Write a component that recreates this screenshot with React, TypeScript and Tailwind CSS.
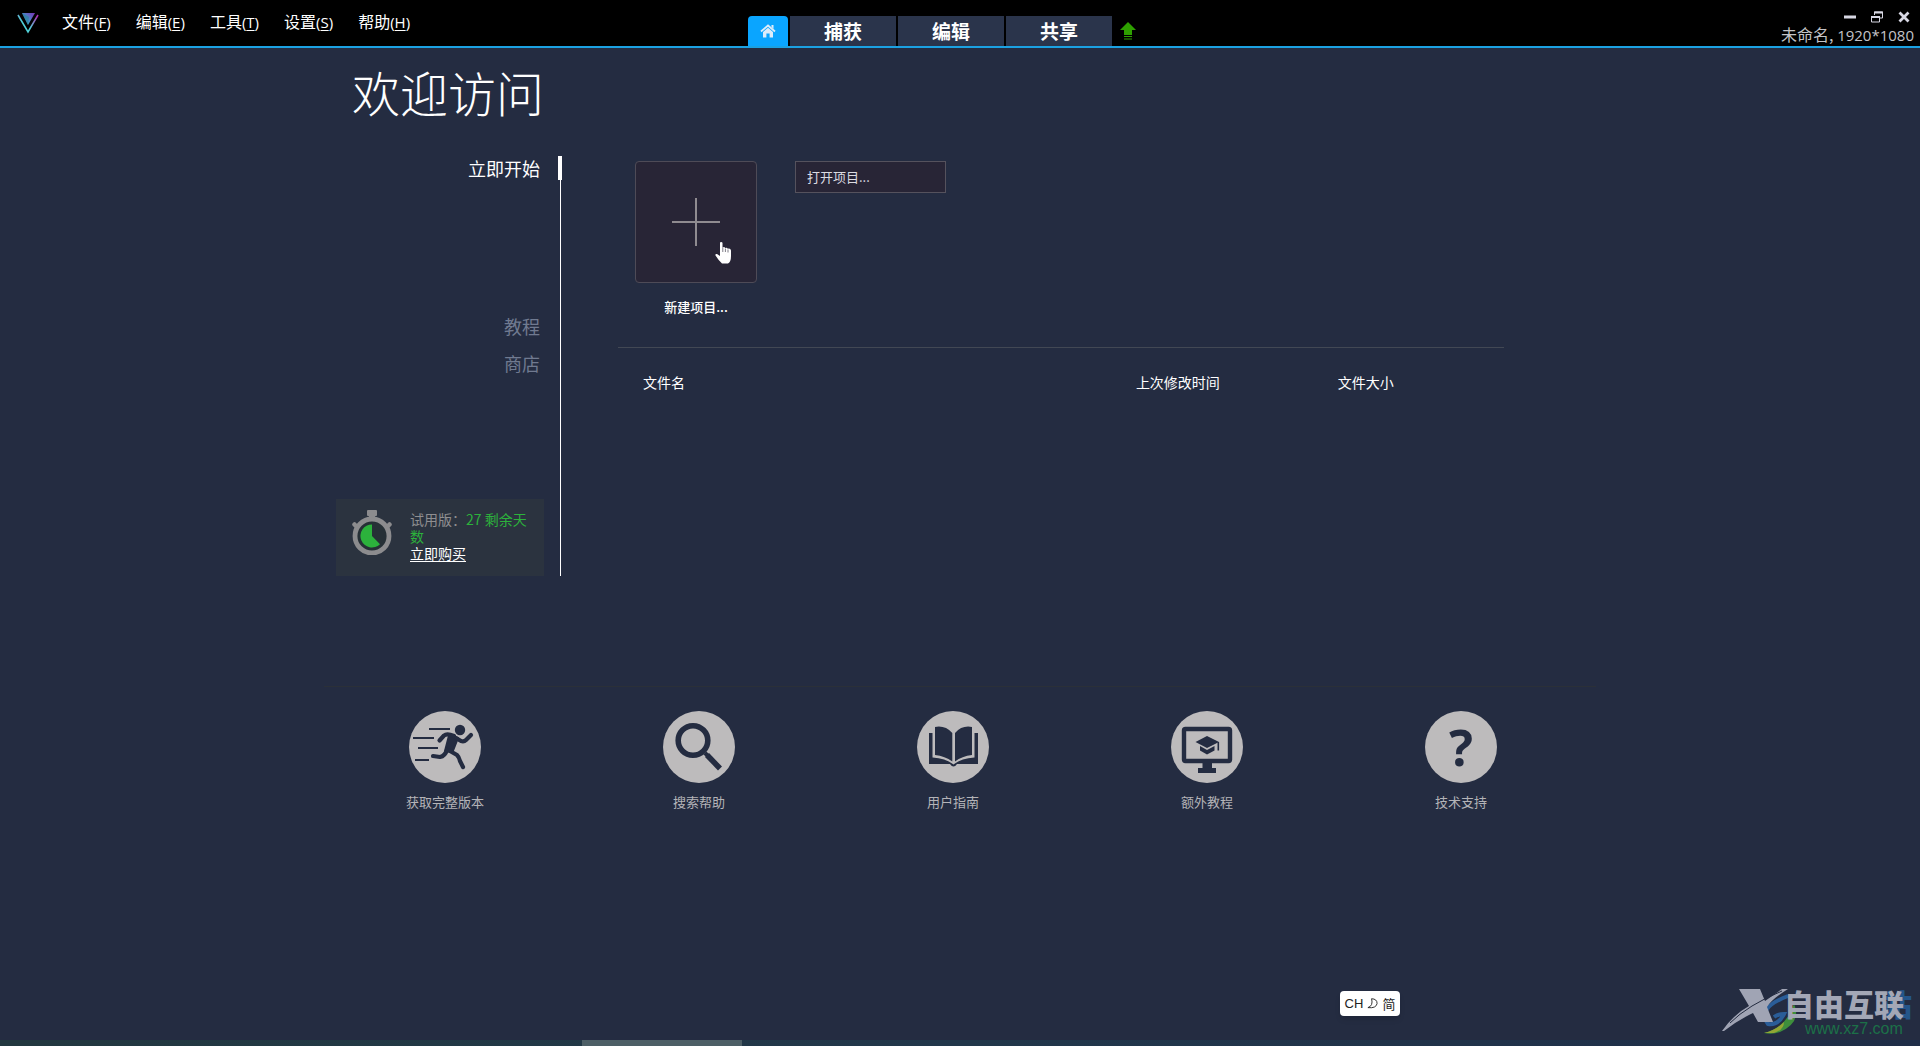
import React from "react";

const menus = [
  { label: "文件", key: "F" },
  { label: "编辑", key: "E" },
  { label: "工具", key: "T" },
  { label: "设置", key: "S" },
  { label: "帮助", key: "H" },
];

function Logo() {
  return (
    <svg className="h-[22px] w-[22px]" viewBox="0 0 22 22" aria-hidden="true">
      <defs>
        <linearGradient id="edge" x1="0" y1="1" x2="1" y2="0">
          <stop offset="0.4" stopColor="#4fd0d8" />
          <stop offset="0.95" stopColor="#b02fb0" />
        </linearGradient>
        <linearGradient id="core" x1="0" y1="1" x2="1" y2="0">
          <stop offset="0.2" stopColor="#35b5d0" />
          <stop offset="1" stopColor="#7a2fb5" />
        </linearGradient>
      </defs>
      <path d="M1 3L11 20L21 3" fill="none" stroke="url(#edge)" strokeWidth="1.6" />
      <path d="M5 1H18L11 13Z" fill="url(#core)" />
      <path d="M5 1L11 13L12 5Z" fill="#2b7f9c" opacity="0.7" />
    </svg>
  );
}

function HomeIcon() {
  return (
    <svg className="h-[14px] w-[16px]" viewBox="0 0 16 14" aria-hidden="true">
      <path d="M1 7.5L8 1.5L15 7.5" fill="none" stroke="#dcecfa" strokeWidth="1.8" />
      <path d="M11.5 1H13.5V5L11.5 3Z" fill="#dcecfa" />
      <path d="M3 8L8 3.8L13 8V13.5H9.6V9.5H6.4V13.5H3Z" fill="#dcecfa" />
    </svg>
  );
}

function Stopwatch() {
  return (
    <svg className="h-[45px] w-10 shrink-0" viewBox="0 0 40 45" aria-hidden="true">
      <g fill="#8c8c8e">
        <rect x="15" y="0" width="10" height="6" rx="1" />
        <rect x="17" y="5" width="6" height="5" />
      </g>
      <path d="M2.500 14.500L7 19M37.500 14.500L33 19" stroke="#8c8c8e" strokeWidth="4.500" strokeLinecap="round" />
      <circle cx="20" cy="26" r="17" fill="#263036" stroke="#8c8c8e" strokeWidth="4.800" />
      <path d="M20 26V14.500A11.500 11.500 0 1 0 28 34.200Z" fill="#2cb23c" />
    </svg>
  );
}

function Runner() {
  return (
    <svg viewBox="0 0 72 72" className="size-[72px]" aria-hidden="true">
      <circle cx="51" cy="19" r="5.200" fill="#242c41" />
      <path d="M20 18H41M4 27H25M9 37H29M6 49H20" stroke="#242c41" strokeWidth="2" />
      <path d="M40 24.500L49 27L43.500 41L36 40Z" fill="#242c41" stroke="#242c41" strokeWidth="2" strokeLinejoin="round" />
      <g fill="none" stroke="#242c41" strokeWidth="4.200" strokeLinecap="round" strokeLinejoin="round">
        <path d="M45 25Q38 22 35 24.500L30.500 29.500" />
        <path d="M47 27L52 30Q55 31 57 29L62 24" />
        <path d="M38 39Q36 45 31 46L24 45" />
        <path d="M41 40L48 44Q50 46 51 50L54 56" />
      </g>
    </svg>
  );
}

function Magnifier() {
  return (
    <svg viewBox="0 0 72 72" className="size-[72px]" aria-hidden="true">
      <circle cx="30" cy="29.500" r="14.800" fill="none" stroke="#242c41" strokeWidth="5.600" />
      <path d="M42 42L45 45" stroke="#242c41" strokeWidth="4" />
      <path d="M44 44L57 57.500" stroke="#242c41" strokeWidth="5.600" />
    </svg>
  );
}

function Book() {
  return (
    <svg viewBox="0 0 72 72" className="size-[72px]" aria-hidden="true">
      <g fill="#242c41">
        <path d="M18 16Q28 14 35.300 22V50.500Q28 45 18 44Z" />
        <path d="M55 16Q45 14 38 22V50.500Q45 45 55 44Z" />
        <path d="M12 22H15.500V46.500Q29 47.500 36.500 53.500Q44 47.500 57.500 46.500V22H61V53H40Q36.500 58 33 53H12Z" />
      </g>
    </svg>
  );
}

function Monitor() {
  return (
    <svg viewBox="0 0 72 72" className="size-[72px]" aria-hidden="true">
      <rect x="13" y="18" width="46" height="32" rx="1.500" fill="none" stroke="#242c41" strokeWidth="4.400" />
      <g fill="#242c41">
        <path d="M31.500 51H41V57H45V62H27V57H31.500Z" />
        <path d="M24.500 31L36 25L48 31L36 37Z" />
        <path d="M29 35L36 39L43.500 35V39.500L36 43.500L29 39.500Z" />
      </g>
      <path d="M47.300 31V39.500" stroke="#242c41" strokeWidth="1.600" />
    </svg>
  );
}

const links = [
  { label: "获取完整版本", icon: <Runner /> },
  { label: "搜索帮助", icon: <Magnifier /> },
  { label: "用户指南", icon: <Book /> },
  { label: "额外教程", icon: <Monitor /> },
  {
    label: "技术支持",
    icon: <span className="font-['Noto_Sans'] text-[50px] leading-none font-bold text-[#242c41]">?</span>,
  },
];

function Header() {
  return (
    <header className="grid h-12 grid-cols-[1fr_auto_1fr] grid-rows-[46px] border-b-2 border-[#1ba1e2] bg-black text-white">
      <div className="flex items-center pl-[17px]">
        <Logo />
        <nav className="ml-[23px] flex gap-[25px] pb-1 text-base">
          {menus.map((m) => (
            <button key={m.key} type="button" className="whitespace-nowrap">
              {m.label}
              <span className="font-['Open_Sans'] text-[15px]">
                (<u className="underline-offset-2">{m.key}</u>)
              </span>
            </button>
          ))}
        </nav>
      </div>
      <div className="flex items-end gap-0.5 pr-9">
        <button type="button" aria-label="主页" className="flex h-[30px] w-10 items-center justify-center rounded-t-sm bg-[#0aa5ff]">
          <HomeIcon />
        </button>
        {["捕获", "编辑", "共享"].map((t) => (
          <button key={t} type="button" className="h-[30px] w-[106px] bg-[#2a344b] text-[19px] leading-7 font-bold">
            {t}
          </button>
        ))}
        <button type="button" aria-label="更新" className="ml-1.5 flex h-[30px] w-4 items-center">
          <svg viewBox="0 0 16 18" className="h-[18px] w-4" aria-hidden="true">
            <path d="M8 0L16 8H12V13H4V8H0Z" fill="#2ea000" />
            <path d="M4 14.500H12M4 17H12" stroke="#2ea000" />
          </svg>
        </button>
      </div>
      <div className="flex flex-col items-end pt-2.5 pr-1.5">
        <div className="flex h-[14px] items-center gap-[15px] pr-1 text-[#d8d8e4]">
          <button type="button" aria-label="最小化">
            <svg viewBox="0 0 12 12" className="size-3" aria-hidden="true">
              <path d="M0 6H12" stroke="currentColor" strokeWidth="3" />
            </svg>
          </button>
          <button type="button" aria-label="还原">
            <svg viewBox="0 0 12 12" className="size-3" aria-hidden="true">
              <path d="M3.500 4V1H11.500V7H9" fill="none" stroke="currentColor" />
              <path d="M3 1.500H12" stroke="currentColor" strokeWidth="2" />
              <path d="M0.500 5.500H8.500V11H0.500Z" fill="none" stroke="currentColor" />
              <path d="M0 6H9" stroke="currentColor" strokeWidth="2" />
            </svg>
          </button>
          <button type="button" aria-label="关闭">
            <svg viewBox="0 0 12 12" className="size-3" aria-hidden="true">
              <path d="M1.500 1.500L10.500 10.500M10.500 1.500L1.500 10.500" stroke="currentColor" strokeWidth="2.800" />
            </svg>
          </button>
        </div>
        <p className="text-base leading-[22px] whitespace-nowrap text-[#c4c4c8]">
          未命名, <span className="font-['Open_Sans'] text-[15px]">1920*1080</span>
        </p>
      </div>
    </header>
  );
}

function Sidebar() {
  return (
    <aside className="mr-[57px] ml-3 flex h-[420px] w-[225px] flex-col border-r border-white text-lg leading-6">
      <div className="flex justify-end gap-[18px]">
        <button type="button" className="leading-[22px] text-white">立即开始</button>
        <span className="-mr-0.5 h-6 w-1 bg-white" />
      </div>
      <div className="mt-[134px] flex flex-col items-end gap-[13px] pr-5 text-[#707a90]">
        <button type="button">教程</button>
        <button type="button">商店</button>
      </div>
      <div className="mt-auto mr-4 flex h-[77px] gap-[18px] bg-[#2b333f] pt-[11px] pr-3 pl-4">
        <Stopwatch />
        <p className="pt-px text-sm leading-[17px] text-[#8e8e90]">
          试用版：<span className="text-[#2cb23c]">27 剩余天数</span>
          <br />
          <a href="#buy" className="text-white underline underline-offset-2">立即购买</a>
        </p>
      </div>
    </aside>
  );
}

function Start() {
  return (
    <section className="mr-[92px] flex-1">
      <div className="flex gap-[38px] border-b border-[#424854] pt-[5px] pb-[30px] pl-[17px]">
        <div className="flex flex-col items-center">
          <div className="relative">
            <button type="button" aria-labelledby="new-project" className="flex size-[122px] items-center justify-center rounded border border-[#4e4b57] bg-[#282536]">
              <svg viewBox="0 0 48 48" className="size-12" aria-hidden="true">
                <path d="M24 0V48M0 24H48" stroke="#8f8b90" strokeWidth="2" />
              </svg>
            </button>
            <svg viewBox="0 0 16 22" className="absolute top-[81px] left-20 h-[22px] w-4" aria-hidden="true">
              <path d="M5 1Q5 0 6 0Q7.500 0 7.500 1V5.500Q9.500 4.500 10.200 6Q12 5 12.800 6.800Q15.500 6 16 8.500V14Q16 20 13 21.500H7Q4 19 0.500 13.500Q0 11.500 2 12L5 14Z" fill="white" />
              <path d="M7.800 5.500V10M10.400 6.500V10M13 7.500V10.500" stroke="#282536" strokeWidth="0.600" />
            </svg>
          </div>
          <p id="new-project" className="mt-[14px] text-[13px] leading-5 font-medium text-white">新建项目...</p>
        </div>
        <button type="button" className="h-8 w-[151px] border border-[#55525d] bg-[#282536] pl-[11px] text-left text-[13px] text-[#dcdce2]">
          打开项目...
        </button>
      </div>
      <table className="mt-6 w-full table-fixed text-sm leading-5 text-white">
        <thead>
          <tr className="text-left">
            <th className="w-[58%] pl-[25px] font-normal">文件名</th>
            <th className="w-[23%] pl-1 font-normal">上次修改时间</th>
            <th className="pl-0.5 font-normal">文件大小</th>
          </tr>
        </thead>
      </table>
    </section>
  );
}

function Watermark() {
  return (
    <div className="absolute right-2 bottom-[10px] h-12 w-[192px]">
      <svg viewBox="0 0 192 48" className="absolute inset-0 h-12 w-[192px]" aria-hidden="true">
        <path d="M68 8Q36 20 48 36Q58 38 64 26Q58 26 54 29" fill="none" stroke="#2a5d98" strokeWidth="4" />
        <path d="M44 45Q66 40 74 16Q82 34 60 44Q52 47 44 45Z" fill="#3e8e3c" />
        <path d="M44 45Q56 42 64 34Q64 42 54 45Z" fill="#93a634" />
        <path d="M19 1H40L45 13L62 1H68Q52 11 47 19L53 34H38L33 25Q18 32 4 43H2Q14 26 29 18Z" fill="#a0a4b4" />
        <path d="M10 35Q28 17 62 3" fill="none" stroke="#242c41" />
      </svg>
      <span className="absolute -top-px right-0 text-[30px] leading-8 font-black whitespace-nowrap text-[#24558a]">站</span>
      <span className="absolute -top-px left-[64px] text-[30px] leading-8 font-black whitespace-nowrap text-[#a3a7b6]">自由互联</span>
      <span className="absolute top-[31px] left-[85px] font-['Liberation_Sans'] text-base leading-5 text-[#1c7048]">www.xz7.com</span>
    </div>
  );
}

export default function App() {
  return (
    <div className="relative flex min-h-screen flex-col bg-[#242c41] font-['Noto_Sans_CJK_SC',sans-serif]">
      <Header />
      <main className="mx-auto w-full max-w-[1272px] flex-1">
        <h1 className="pt-2 pl-7 text-5xl leading-[70px] font-light text-white">欢迎访问</h1>
        <div className="mt-[30px] flex">
          <Sidebar />
          <Start />
        </div>
        <footer className="mt-[110px] border-t border-[#2b3038] pt-6">
          <ul className="mr-2 -ml-1.5 grid grid-cols-5">
            {links.map((l) => (
              <li key={l.label} className="flex justify-center">
                <a href="#help" className="flex flex-col items-center gap-[9px] text-[13px] leading-5 text-[#b4b4b8]">
                  <span className="flex size-[72px] items-center justify-center rounded-full bg-[#bdbbbc]">{l.icon}</span>
                  {l.label}
                </a>
              </li>
            ))}
          </ul>
        </footer>
      </main>
      <div className="h-1.5 bg-gradient-to-r from-[#22383f] via-[#21374a] to-[#1f2e48]">
        <div className="ml-[582px] h-full w-40 bg-[#4d5f66]" />
      </div>
      <div className="absolute right-[520px] bottom-[30px] flex h-[25px] w-[60px] items-center justify-center gap-1 rounded bg-white text-[13px] text-[#222222] shadow-md">
        <span className="font-['Liberation_Sans']">CH</span>
        <svg viewBox="0 0 12 12" className="size-[11px]" aria-hidden="true">
          <path d="M5 0.800Q11 1 11 6Q10 11.500 1 10.500Q7 8.500 5 0.800Z" fill="none" stroke="#222222" />
        </svg>
        <span>简</span>
      </div>
      <Watermark />
    </div>
  );
}
